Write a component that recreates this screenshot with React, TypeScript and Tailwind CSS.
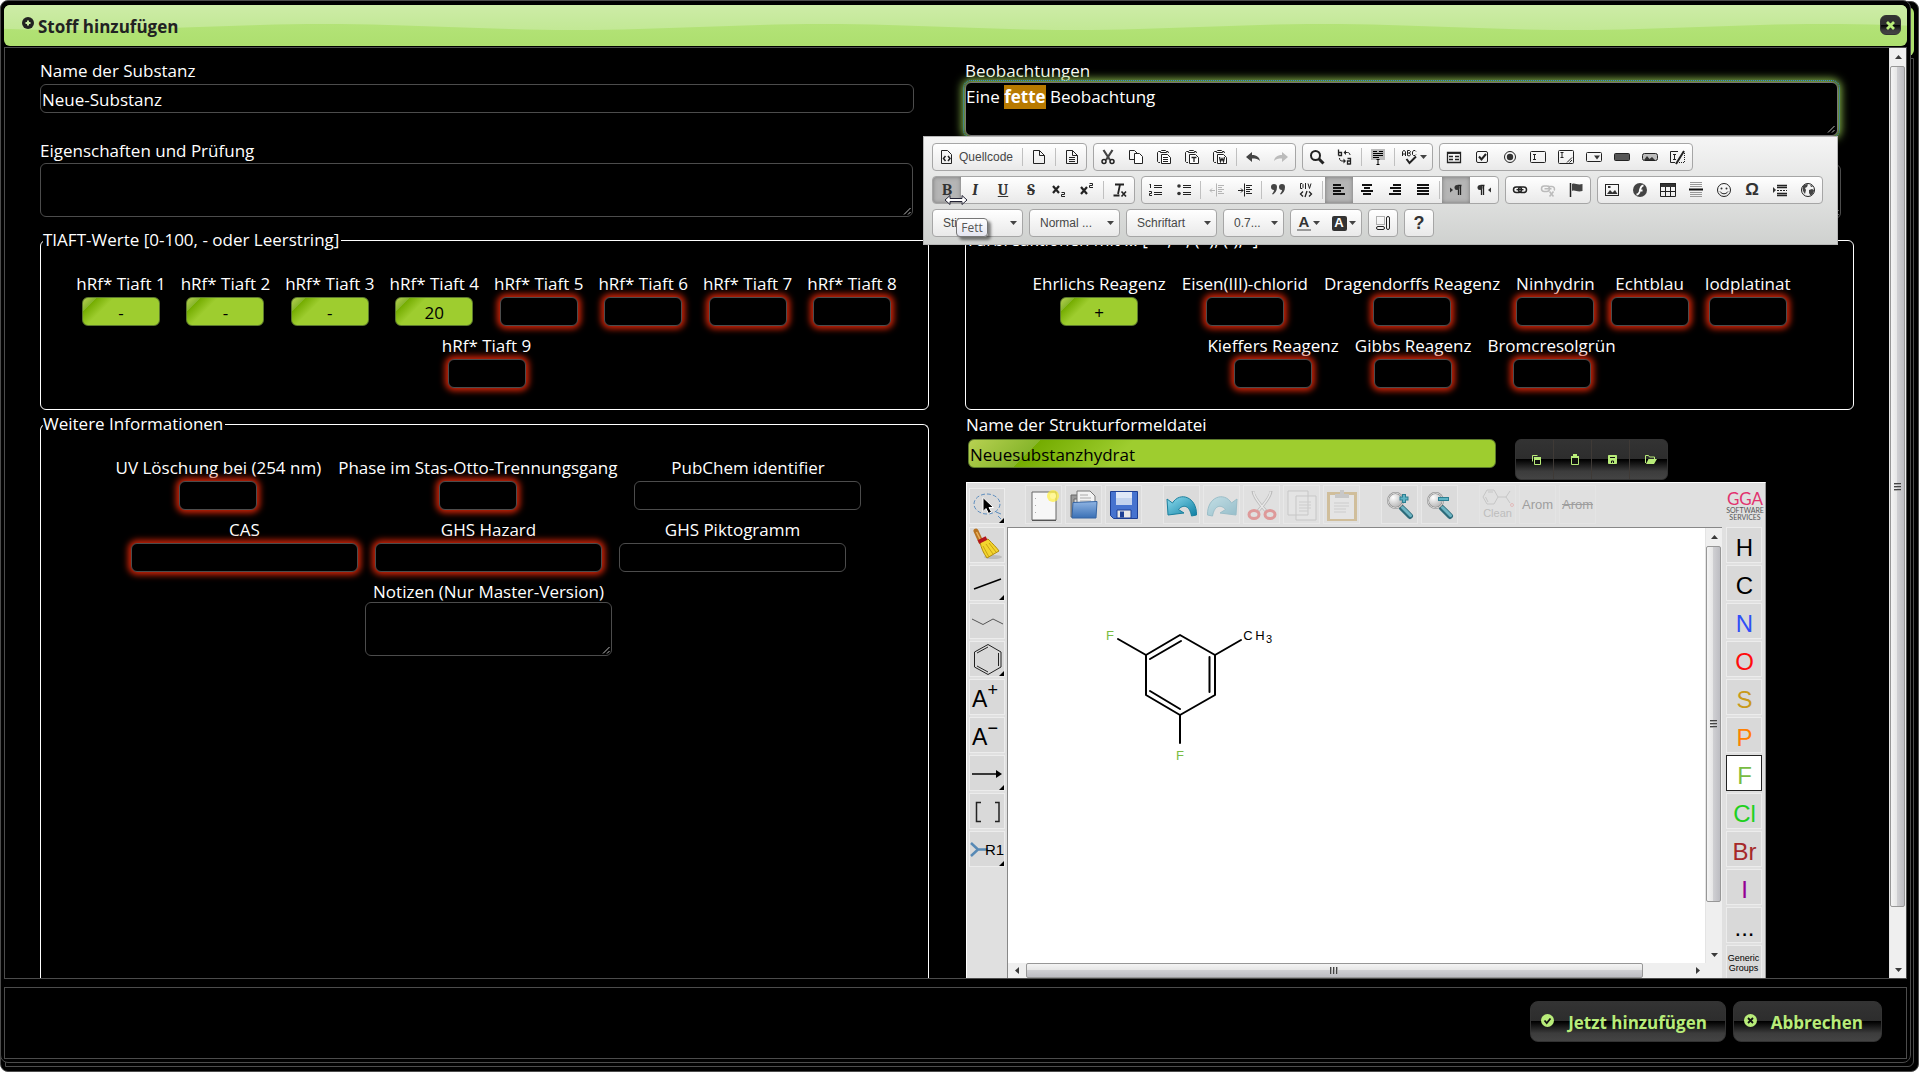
import { useId, type ReactNode } from "react";

/* ---------- shared pieces ---------- */

const BOX = "block h-[29px] rounded-md border text-[17px] leading-6 outline-none";
const TONES = {
  plain: "border-[#4c4c4c] bg-black text-white",
  missing: "border-[#4c4c4c] bg-black text-white shadow-[0_0_6px_3px_#cf2408]",
  valid:
    "border-[#5c7a2c] bg-[linear-gradient(135deg,#b8d152_0%,#86b52b_13%,#74ac00_13%,#9ecd2f_30%)] text-black",
};

type Tone = keyof typeof TONES;

function Field({ label, value = "", tone = "missing", wide = false }: { label: string; value?: string; tone?: Tone; wide?: boolean }) {
  const id = useId();
  return (
    <div className="flex flex-col items-center">
      <label htmlFor={id} className="mb-px h-6 whitespace-nowrap">{label}</label>
      <input id={id} defaultValue={value} className={`${BOX} ${TONES[tone]} ${wide ? "w-[227px]" : "w-[78px]"} pt-0.5 text-center`} />
    </div>
  );
}

function Grip() {
  return (
    <svg className="pointer-events-none absolute right-0.5 bottom-0.5" width="8" height="8" viewBox="0 0 8 8" stroke="#bbb" fill="none">
      <path d="M1 7.5 7.5 1M5 7.5 7.5 5" />
    </svg>
  );
}

function Area({ className }: { className: string }) {
  return <textarea aria-label="Prüfung" className={`${className} block h-[55px] resize-none rounded-md border border-[#4c4c4c] bg-black p-0.5 outline-none`} />;
}

function Arrow({ dir }: { dir: "up" | "down" | "left" | "right" }) {
  const d = { up: "M1 6 4.5 2 8 6z", down: "M1 3 4.5 7 8 3z", left: "M6 1 2 4.5 6 8z", right: "M3 1 7 4.5 3 8z" }[dir];
  return <svg width="9" height="9" viewBox="0 0 9 9" fill="#3a3a3a"><path d={d} /></svg>;
}

function VScroll({ thumb }: { thumb: string }) {
  return (
    <div className="flex w-[17px] shrink-0 flex-col items-center border-l border-[#e4e4e4] bg-[#efefef]">
      <div className="flex h-[18px] shrink-0 items-center"><Arrow dir="up" /></div>
      <div className="flex min-h-0 w-full flex-1 flex-col">
        <div className={`${thumb} flex w-[15px] flex-col items-center justify-center gap-px rounded-xs border border-[#979797] bg-[linear-gradient(90deg,#f4f4f4_0%,#e6e6e6_45%,#cfcfd2_50%,#bdbdc2_100%)]`}>
          <i className="h-0.5 w-[7px] border-t border-[#444] bg-[#aaa]" />
          <i className="h-0.5 w-[7px] border-t border-[#444] bg-[#aaa]" />
          <i className="h-0.5 w-[7px] border-t border-[#444] bg-[#aaa]" />
        </div>
      </div>
      <div className="flex h-[17px] shrink-0 items-center"><Arrow dir="down" /></div>
    </div>
  );
}

function HScroll() {
  return (
    <div className="flex h-[15px] shrink-0 items-center bg-[#efefef] pr-[17px]">
      <div className="flex w-[18px] shrink-0 justify-center"><Arrow dir="left" /></div>
      <div className="flex h-full min-w-0 flex-1">
        <div className="flex h-full w-[93%] items-center justify-center gap-px rounded-xs border border-[#979797] bg-[linear-gradient(180deg,#f4f4f4_0%,#e6e6e6_45%,#cfcfd2_50%,#bdbdc2_100%)]">
          <i className="h-[7px] w-0.5 border-l border-[#444] bg-[#aaa]" />
          <i className="h-[7px] w-0.5 border-l border-[#444] bg-[#aaa]" />
          <i className="h-[7px] w-0.5 border-l border-[#444] bg-[#aaa]" />
        </div>
      </div>
      <div className="flex w-[16px] shrink-0 justify-center"><Arrow dir="right" /></div>
    </div>
  );
}

/* ---------- rich text toolbar ---------- */

function Svg({ children }: { children: ReactNode }) {
  return <svg width="16" height="16" viewBox="0 0 16 16" fill="none" stroke="#222" strokeWidth="1">{children}</svg>;
}

const page = <path d="M2.5 1.5h6l5 5v8h-11zM8.5 1.5v5h5" />;
const clip = (
  <>
    <path d="M4 13.5H2.500l-1-1v-9l1-1H4M10.500 2.500H12l.5 1.500" />
    <path d="M4.500 3.500v-1l1-1h4l1 1v1z" fill="#fff" />
    <path d="M5.500 5.500h6l3 3v6h-9z" fill="#fff" />
  </>
);
const glyph = "font-serif font-bold";

const ICONS: Record<string, ReactNode> = {
  source: <Svg><path d="M2.500 1.500h6l4 4v9h-10z" /><path d="M6.500 7 4.500 9.500l2 2.500M9 7l2 2.500L9 12" strokeWidth="1.500" /></Svg>,
  newpage: <Svg>{page}</Svg>,
  template: <Svg>{page}<path d="M5 8.500h6M5 10.500h6M5 12.500h6" /></Svg>,
  cut: <Svg><path d="M3.500 1 10 11M12.500 1 6 11" strokeWidth="2.200" stroke="#444" /><circle cx="4" cy="12.500" r="2" strokeWidth="1.500" /><circle cx="12" cy="12.500" r="2" strokeWidth="1.500" /></Svg>,
  copy: <Svg><path d="M1.500 1.500h5l3 3v6h-8z" /><path d="M6.500 4.500h5l3 3v7h-8z" fill="#fff" /></Svg>,
  paste: <Svg>{clip}<path d="M7 8.500h5M7 10.500h5M7 12.500h5" /></Svg>,
  pastetext: <Svg>{clip}<path d="M7.500 8.500h5M10 8.500V13" strokeWidth="1.300" /></Svg>,
  pasteword: <Svg>{clip}<path d="m7.500 8 1 4.500 1.500-3 1.500 3 1-4.500" strokeWidth="1.300" /></Svg>,
  undo: <Svg><path d="M1 8 7 3v3c5 0 7.500 2.500 8 6-2-2-4-2.500-8-2.500V13z" fill="#444" stroke="none" /></Svg>,
  redo: <Svg><path d="M15 8 9 3v3c-5 0-7.500 2.500-8 6 2-2 4-2.500 8-2.500V13z" fill="#bbb" stroke="none" /></Svg>,
  find: <Svg><circle cx="6.500" cy="6.500" r="4.500" strokeWidth="2" /><path d="m10 10 4.500 4.500" strokeWidth="3" /></Svg>,
  replace: <Svg><path d="M1.500.5v6M1.500 3.500h3v3h-3M10.500 9.500h3v6M13.500 12h-3v3h3" strokeWidth="1.300" /><path d="M8.500 3.500h2c1.500 0 2.500 1 2.500 2.500M2.500 9c0 2 1 3 2.500 3h2" /><path d="M9 1 6.500 3.500 9 6zM6.500 9.500 9 12l-2.500 2.500z" fill="#222" stroke="none" /></Svg>,
  selectall: <Svg><path d="M1 0h14v11H1z" fill="#bbb" stroke="none" /><path d="M3 2.500h4M9 2.500h4M3 4.500h10M3 6.500h10M3 8.500h6M8 10.500v5M6.500 10.500h3M6.500 15.500h3" stroke="#000" /></Svg>,
  spell: <Svg><path d="M.5 7V3l1-1.500h1L3.500 3v4M.5 5h3M5.500 6.500v-5h2l1 1-1 1.500 1 1.500-1 1.500zM6 4h2M14 2.500 13 1.500h-1.500l-1 1.500v2.500l1 1H13l1-1" /><path d="m4.500 10 3 4L14 7.500" strokeWidth="2" /></Svg>,
  form: <Svg><path d="M1 3h14v2H1z" fill="#333" stroke="none" /><path d="M1.500 3.500h13v10h-13zM3 7.500h4M9 7.500h4M3 10.500h4M9 10.500h4" strokeWidth="1.300" /></Svg>,
  check: <Svg><rect x="2.500" y="2.500" width="11" height="11" rx="1.500" /><path d="m5 7.500 2.500 3L12 5" strokeWidth="2" /></Svg>,
  radio: <Svg><circle cx="8" cy="8" r="5.500" /><circle cx="8" cy="8" r="3.200" fill="#333" stroke="none" /></Svg>,
  textfield: <Svg><rect x=".5" y="2.500" width="15" height="11" rx="1" /><path d="M3 5.500h3M3 10.500h3M4.500 5.500v5" /></Svg>,
  textarea: <Svg><rect x=".5" y="1.500" width="15" height="13" rx="1" /><path d="M2.500 3.500h3M2.500 8.500h3M4 3.500v5M9 13.500l5-5M11.500 13.500l2.500-2.500" /></Svg>,
  select: <Svg><rect x=".5" y="3.500" width="15" height="9" rx="1" /><path d="M8 6.500h6l-3 4z" fill="#333" stroke="none" /></Svg>,
  button: <Svg><rect x=".5" y="4.500" width="15" height="7" rx="1" fill="#555" /></Svg>,
  imagebutton: <Svg><rect x=".5" y="4.500" width="15" height="7" rx="2" fill="#bbb" /><path d="m2 11 3-4 2.500 3L10 8l3 3z" fill="#333" stroke="none" /></Svg>,
  hidden: <Svg><path d="M8 2.500H.5v11H5M3 5.500h3M3 10.500h3M4.500 5.500v5" /><path d="M14 2 6 15" strokeWidth="2" /><path d="M14.500 4v9.500H9" strokeDasharray="1 1" /></Svg>,
  bold: <span className={`${glyph} text-[16px]`}>B</span>,
  italic: <span className={`${glyph} text-[16px] italic`}>I</span>,
  underline: <span className={`${glyph} text-[15px] underline`}>U</span>,
  strike: <span className={`${glyph} text-[16px] line-through`}>S</span>,
  sub: <Svg><path d="m2 4 6 7M8 4l-6 7" strokeWidth="2.200" /><path d="M10.500 10.500h3v2h-3v2h3.500" /></Svg>,
  sup: <Svg><path d="m2 5 6 7M8 5l-6 7" strokeWidth="2.200" /><path d="M10.500 1.500h3v2h-3v2h3.500" /></Svg>,
  removeformat: <Svg><path d="M3 2.500h9M8 2.500 6 12M1.500 13.500h6" strokeWidth="1.800" /><path d="m9.500 9.500 4.500 5M14 9.500l-4.500 5" strokeWidth="1.600" /></Svg>,
  ol: <Svg><path d="M2.500 2v4M1.500 2.500h1M1 9.500h2.500v2H1.500v2H4" /><path d="M6 3.500h8M6 5.500h8M6 10.500h8M6 12.500h8" /></Svg>,
  ul: <Svg><circle cx="3" cy="4" r="1.800" fill="#333" stroke="none" /><circle cx="3" cy="11.500" r="1.800" fill="#333" stroke="none" /><path d="M7 3.500h8M7 5.500h8M7 10.500h8M7 12.500h8" /></Svg>,
  outdent: <Svg><g stroke="#b5b5b5"><path d="M7.500 1.500v13M9 3.500h6M9 5.500h4M9 7.500h6M9 9.500h4M9 11.500h6M1 8.500h5M3 6.500 1 8.500l2 2" /></g></Svg>,
  indent: <Svg><path d="M7.500 1.500v13M9 3.500h6M9 5.500h4M9 7.500h6M9 9.500h4M9 11.500h6M1 8.500h5M4 6.500l2 2-2 2" /></Svg>,
  quote: <Svg><path d="M1 5a3 3 0 1 1 6 0c0 4-2 6-4 7.500L2 12c1-1.500 2-2.500 2-4-2 0-3-1-3-3zM9 5a3 3 0 1 1 6 0c0 4-2 6-4 7.500L10 12c1-1.500 2-2.500 2-4-2 0-3-1-3-3z" fill="#444" stroke="none" /></Svg>,
  div: <Svg><path d="M2.500 1.500v5M2.500 1.500H4l1 1v3l-1 1H2.500M7.500 1v6M10 1.500l1.500 5 1.500-5" /><path d="M5 9.500 2.500 12 5 14.500M11 9.500l2.500 2.500-2.500 2.500M9 9l-2 6" strokeWidth="1.300" /></Svg>,
  left: <Svg><path d="M2 3h8M2 6h11M2 9h8M2 12h12" strokeWidth="2" stroke="#111" /></Svg>,
  center: <Svg><path d="M3 3h10M5 6h6M2 9h12M4 12h8" strokeWidth="2" stroke="#111" /></Svg>,
  right: <Svg><path d="M6 3h8M3 6h11M6 9h8M2 12h12" strokeWidth="2" stroke="#111" /></Svg>,
  justify: <Svg><path d="M2 3h12M2 6h12M2 9h12M2 12h12" strokeWidth="2" stroke="#111" /></Svg>,
  ltr: <Svg><path d="M2 5.500 5 8l-3 2.500z" fill="#333" stroke="none" /><path d="M13.500 3.500h-4M10.500 3v10M12.500 3v10" strokeWidth="1.300" /><circle cx="9" cy="5.500" r="2.500" fill="#333" stroke="none" /></Svg>,
  rtl: <Svg><path d="M15 5.500 12 8l3 2.500z" fill="#333" stroke="none" /><path d="M8.500 3.500h-4M5.500 3v10M7.500 3v10" strokeWidth="1.300" /><circle cx="4" cy="5.500" r="2.500" fill="#333" stroke="none" /></Svg>,
  link: <Svg><rect x="1.500" y="5" width="8" height="5.500" rx="2.700" strokeWidth="1.500" /><rect x="6.500" y="5" width="8" height="5.500" rx="2.700" strokeWidth="1.500" /><path d="M4.500 7.700h7" strokeWidth="1.300" /></Svg>,
  unlink: <Svg><g stroke="#bbb"><rect x="1.500" y="4" width="8" height="5.500" rx="2.700" strokeWidth="1.500" /><path d="M8 4.500h4a2.500 2.500 0 0 1 2 4M4.500 6.800h7" strokeWidth="1.500" /><path d="m9.500 9.500 4 5M13.500 9.500l-4 5" strokeWidth="1.600" /></g></Svg>,
  flag: <Svg><path d="M2.500 1v14" strokeWidth="1.500" /><path d="M4 2c3-1.500 5 1.500 10.500 0v7C9 10.500 7 7.500 4 9z" fill="#444" stroke="none" /></Svg>,
  image: <Svg><rect x="1.500" y="2.500" width="13" height="11" /><path d="m3 12 3-4 2.500 2.500L11 8l2.500 4zM4 4h2.500v2H4z" fill="#333" stroke="none" /></Svg>,
  flash: <Svg><circle cx="8" cy="8" r="7" fill="#444" stroke="none" /><path d="M11.500 3.500C8.500 3.500 8 8 7.500 10c-.5 1.500-1.500 2.500-3 2.500M7 8.500h3.500" stroke="#fff" strokeWidth="1.800" /></Svg>,
  table: <Svg><path d="M0 1h16v4H0z" fill="#333" stroke="none" /><path d="M.5 1.500h15v13H.5zM.5 9.500h15M5.500 5v9.500M10.500 5v9.500" /></Svg>,
  hr: <Svg><path d="M2 .5h12M2 2.500h12M2 4.500h12M2 10.500h12M2 12.500h12M2 14.500h12" stroke="#999" /><path d="M1 7.500h14" strokeWidth="2" stroke="#111" /></Svg>,
  smiley: <Svg><circle cx="8" cy="8" r="6.500" /><circle cx="5.500" cy="6.500" r="1" fill="#333" stroke="none" /><circle cx="10.500" cy="6.500" r="1" fill="#333" stroke="none" /><path d="M4 9.500c2 3 6 3 8 0" /></Svg>,
  omega: <span className="text-[17px] font-bold">Ω</span>,
  pagebreak: <Svg><path d="M1 5v6l3-3z" fill="#333" stroke="none" /><path d="M5 3.500h10M5 5.500h10M5 11.500h10M5 13.500h10" strokeWidth="1.500" /><path d="M5 8.500h10" strokeDasharray="2 1" /></Svg>,
  globe: <Svg><circle cx="8" cy="8" r="6.500" /><path d="M3 4c2-2 4-2 5-1.500L7 5 5 6l1 2-1 4C3 10 2 7 3 4zM9 8l3-1 2 1c0 3-2 5-3.500 5.500L9 11zM10 2.500l3 2-2 .5z" fill="#444" stroke="none" /></Svg>,
  color: <span className="border-b-2 border-[#999] px-0.5 text-[15px] leading-[14px] font-bold">A</span>,
  bgcolor: <span className="flex h-[15px] w-[15px] items-center justify-center rounded-xs bg-[#333] text-[13px] font-bold text-white">A</span>,
  blocks: <Svg><rect x="1.500" y="1.500" width="8" height="8" strokeDasharray="1 1" stroke="#666" /><rect x="1.500" y="11.500" width="8" height="3" rx="1.500" /><rect x="11.500" y="1.500" width="3" height="13" rx="1.500" /></Svg>,
  help: <span className="text-[18px] font-bold">?</span>,
};

function Tool({ name, active = false, arrow = false }: { name: string; active?: boolean; arrow?: boolean }) {
  return (
    <button
      type="button"
      aria-label={name}
      aria-pressed={active}
      className={`flex h-full shrink-0 items-center justify-center gap-0.5 ${arrow ? "w-[35px]" : "w-7"} ${active ? "bg-[#b5b5b5] shadow-[inset_0_0_4px_#777]" : ""}`}
    >
      {ICONS[name]}
      {arrow && <Caret />}
    </button>
  );
}

function Caret() {
  return <svg width="7" height="4" viewBox="0 0 7 4" fill="#444"><path d="M0 0h7L3.500 4z" /></svg>;
}

function Group({ children }: { children: ReactNode }) {
  return <div className="flex h-7 shrink-0 items-center overflow-hidden rounded-sm border border-[#a6a6a6] bg-linear-to-b from-white to-[#e9e9e9]">{children}</div>;
}

function Tools({ items, active = [] }: { items: string; active?: string[] }) {
  return (
    <Group>
      {items.split(" ").map((name, i) =>
        name === "|" ? (
          <i key={i} className="mx-0.5 h-[18px] w-px shrink-0 bg-[#c0c0c0]" />
        ) : (
          <Tool key={i} name={name} active={active.includes(name)} arrow={["spell", "color", "bgcolor"].includes(name)} />
        ),
      )}
    </Group>
  );
}

function Combo({ label, text, narrow = false }: { label: string; text: string; narrow?: boolean }) {
  return (
    <div className={`relative h-7 shrink-0 ${narrow ? "w-[61px]" : "w-[91px]"}`}>
      <select aria-label={label} className="h-full w-full appearance-none rounded-sm border border-[#a6a6a6] bg-linear-to-b from-white to-[#e9e9e9] pl-2.5 text-[12px] text-[#474747]">
        <option>{text}</option>
      </select>
      <span className="pointer-events-none absolute top-3 right-1.5"><Caret /></span>
    </div>
  );
}

function EditorToolbar() {
  return (
    <div className="absolute top-[77px] right-4 -left-[42px] z-10 flex flex-col gap-[5px] border border-[#b6b6b6] bg-linear-to-b from-[#f5f5f5] to-[#cfd1cf] px-2 pt-1.5 pb-[7px] font-['Liberation_Sans',sans-serif] text-[#333]">
      <div className="flex gap-1.5">
        <Group>
          <button type="button" className="flex h-full items-center gap-1 pr-[7px] pl-1.5 text-[12px] text-[#474747]">{ICONS.source}Quellcode</button>
          <i className="mx-0.5 h-[18px] w-px bg-[#c0c0c0]" />
          <Tool name="newpage" />
          <i className="mx-0.5 h-[18px] w-px bg-[#c0c0c0]" />
          <Tool name="template" />
        </Group>
        <Tools items="cut copy paste pastetext pasteword | undo redo" />
        <Tools items="find replace | selectall | spell" />
        <Tools items="form check radio textfield textarea select button imagebutton hidden" />
      </div>
      <div className="flex gap-1.5">
        <Tools items="bold italic underline strike sub sup | removeformat" active={["bold"]} />
        <Tools items="ol ul | outdent indent | quote div | left center right justify | ltr rtl" active={["left", "ltr"]} />
        <Tools items="link unlink flag" />
        <Tools items="image flash table hr smiley omega pagebreak globe" />
      </div>
      <div className="flex gap-1.5">
        <Combo label="Stil" text="Stil" />
        <Combo label="Format" text="Normal ..." />
        <Combo label="Schriftart" text="Schriftart" />
        <Combo label="Größe" text="0.7..." narrow />
        <Tools items="color bgcolor" />
        <Tools items="blocks" />
        <Tools items="help" />
      </div>
      <div role="tooltip" className="absolute top-[81px] left-8 flex h-[19px] w-8 items-center justify-center rounded-sm border border-[#767676] bg-linear-to-b from-white to-[#e4e5f0] font-['Open_Sans',sans-serif] text-[12px] text-[#575757] shadow-[3px_3px_3px_#0007]">Fett</div>
      <svg className="absolute top-[57px] left-[20px]" width="24" height="12" viewBox="0 0 24 12" fill="#fff" stroke="#223" strokeWidth="1">
        <path d="m1 6 5-4.500v3h12v-3L23 6l-5 4.500v-3H6v3z" />
      </svg>
    </div>
  );
}

/* ---------- structure editor ---------- */

const corner = <path d="M35 30v5h-5z" fill="#000" stroke="none" />;

function Cell({ label, children }: { label: string; children: ReactNode }) {
  return (
    <button type="button" aria-label={label} className="h-9 w-9 shrink-0 border border-[#ececec] bg-[#d9d9d9]">
      <svg className="-m-px" width="36" height="36" viewBox="0 0 36 36" fill="none" stroke="#000" strokeWidth="1.500">{children}</svg>
    </button>
  );
}

function Charge({ sign }: { sign: string }) {
  return (
    <button type="button" className="flex h-9 w-9 shrink-0 justify-center border border-[#ececec] bg-[#d9d9d9] pr-1 leading-none">
      <span className="pt-2 text-[23px]">A</span>
      <span className="pt-px text-[18px]">{sign}</span>
    </button>
  );
}

function Big({ label, faded = false, children }: { label: string; faded?: boolean; children: ReactNode }) {
  return (
    <button type="button" aria-label={label} className={`flex h-[39px] w-[37px] shrink-0 items-center justify-center border border-[#e8e8e8] ${faded ? "" : "bg-[#dbdbdb]"}`}>
      <svg className={faded ? "opacity-35" : ""} width="32" height="32" viewBox="0 0 32 32" fill="none">{children}</svg>
    </button>
  );
}

const lens = (
  <>
    <path d="m18 19 8 8" stroke="#2d6b7a" strokeWidth="6" strokeLinecap="round" />
    <path d="m18.500 18.500 8 8" stroke="#6db4c2" strokeWidth="3" strokeLinecap="round" />
    <circle cx="11.500" cy="11.500" r="7.500" fill="url(#lens)" stroke="#888" strokeWidth="2" />
    <circle cx="11.500" cy="11.500" r="7.500" stroke="#eee" strokeWidth=".8" />
  </>
);

const ELEMENTS: [string, string][] = [
  ["H", "text-black"],
  ["C", "text-black"],
  ["N", "text-[#304ff7]"],
  ["O", "text-[#ff0d0d]"],
  ["S", "text-[#c99a19]"],
  ["P", "text-[#ff8000]"],
  ["F", "text-[#78bc42]"],
  ["Cl", "text-[#1fd01f]"],
  ["Br", "text-[#a62929]"],
  ["I", "text-[#940094]"],
  ["...", "text-black"],
];

function StructureEditor() {
  return (
    <section aria-label="Struktureditor" className="mt-0.5 ml-px flex min-h-0 w-[800px] flex-1 flex-col overflow-hidden border-t border-r border-l border-t-white border-r-[#999] border-l-white bg-[#e0e0e0] font-['Liberation_Sans',sans-serif] text-black">
      <svg className="absolute h-0 w-0" aria-hidden="true">
        <defs>
          <radialGradient id="lens" cx=".35" cy=".3" r=".8"><stop offset="0" stopColor="#fff" /><stop offset="1" stopColor="#aaa" /></radialGradient>
          <linearGradient id="blue" x2="0" y2="1"><stop offset="0" stopColor="#8fb4e3" /><stop offset="1" stopColor="#3a70b5" /></linearGradient>
          <linearGradient id="teal" x2="1" y2="1"><stop offset="0" stopColor="#8fdcee" /><stop offset="1" stopColor="#0d7fa3" /></linearGradient>
        </defs>
      </svg>
      <div className="flex h-[44px] shrink-0 items-start gap-[3px] pt-0.5 pl-0.5">
        <div className="mr-[17px] pt-[3px]">
          <Cell label="Auswahl">
            <ellipse cx="18" cy="16" rx="13" ry="10" stroke="#5f8fbf" strokeWidth="1" strokeDasharray="4 2" />
            <path d="m27 24 5 2M29 28l3 3" stroke="#5f8fbf" strokeWidth="1" />
            <path d="M14 9.500v14l3-3 2.500 5 3-1.500-2.500-4.500h4.500z" fill="#000" stroke="#fff" strokeWidth="1" />
            {corner}
          </Cell>
        </div>
        <Big label="Neu">
          <path d="M4 3h24v28H4z" fill="#f7f7f7" stroke="#666" /><path d="M4 31.500h24" stroke="#555" /><path d="M7.500 9v1M7.500 16v1M7.500 23v1" stroke="#aaa" />
          <circle cx="25" cy="7" r="6" fill="#ffef3a" opacity=".7" /><circle cx="25" cy="7" r="3" fill="#fff79a" />
        </Big>
        <Big label="Öffnen">
          <path d="M3 6h8v4h-5v18H3z" fill="#999" stroke="#666" /><path d="M9 2h13l5 5v8H9z" fill="#f3f3f3" stroke="#777" /><path d="M12 6h8M12 9h11M12 12h11" stroke="#aaa" />
          <path d="M5 13.500 29 12.500 28 29H4z" fill="url(#blue)" stroke="#3665a3" />
        </Big>
        <Big label="Speichern">
          <path d="M2.500 2.500h27v27h-24l-3-3z" fill="#4673cf" stroke="#1d3f94" /><path d="M8 3h16v13H8z" fill="#dfe8f8" /><path d="M8 9h16v7H8z" fill="#c3d3ee" /><path d="M9 21h14v8H9z" fill="#e8e8e8" stroke="#1d3f94" /><path d="M12 22.500h4v6h-4z" fill="#1d3f94" />
        </Big>
        <span className="w-[15px]" />
        <Big label="Rückgängig"><path d="M1 10 2 26l16-2-5.500-3.500c4-5 11-5 13 6.500l5-1C31 8 14 2 6.500 14z" fill="url(#teal)" stroke="#1b7f9d" /></Big>
        <Big label="Wiederholen" faded><path d="M31 10 30 26l-16-2 5.500-3.500c-4-5-11-5-13 6.500l-5-1C1 8 18 2 25.500 14z" fill="url(#teal)" stroke="#1b7f9d" /></Big>
        <Big label="Ausschneiden" faded>
          <path d="M7 2c0 3 3 9 13 20M25 2c0 3-3 9-13 20" stroke="#777" strokeWidth="3" /><path d="M7.500 2.500c0 3 3 9 12 19M24.500 2.500c0 3-3 9-12 19" stroke="#f5f5f5" strokeWidth="1.500" />
          <ellipse cx="8" cy="25.500" rx="5" ry="4" stroke="#dc1a1a" strokeWidth="3" /><ellipse cx="24" cy="25.500" rx="5" ry="4" stroke="#dc1a1a" strokeWidth="3" />
        </Big>
        <Big label="Kopieren" faded><path d="M2 2h20v24H2zM10 7h20v24H10z" fill="#eee" stroke="#999" /><path d="M13 13h12M13 16h12M13 19h12M13 22h9" stroke="#aaa" /></Big>
        <Big label="Einfügen" faded><path d="M2.500 4.500h27v27h-27z" fill="#eee" stroke="#b5821e" strokeWidth="3" /><path d="M9 5h5V1h4v4h5v4H9z" fill="#999" /><path d="M8 14h15M8 17h15M8 20h12M8 23h12" stroke="#aaa" /></Big>
        <span className="w-[15px]" />
        <Big label="Vergrößern">{lens}<path d="M20 5v9M15.500 9.500h9" stroke="#2d7f92" strokeWidth="4" /><path d="M20 6v7M16.500 9.500h7" stroke="#5fb3c4" strokeWidth="2" /></Big>
        <Big label="Verkleinern">{lens}<path d="M14 10h11" stroke="#2d7f92" strokeWidth="4" /><path d="M15 10h9" stroke="#5fb3c4" strokeWidth="2" /></Big>
        <span className="w-[15px]" />
        <button type="button" className="flex h-[39px] w-[37px] flex-col items-center justify-end border border-[#e4e4e4] pb-1 text-[11px] leading-3 text-[#bdbdbd]">
          <svg width="32" height="20" viewBox="0 0 32 20" fill="none" stroke="#c6c6c6"><path d="m1 10 4-7h7l4 7-4 7H5zM6 5h5M3.500 10 6 15M16 10h8l4-6M24 10l4 6" /><circle cx="30" cy="18" r="1.500" stroke="#e2baba" /></svg>
          Clean
        </button>
        <button type="button" className="h-[39px] w-[37px] border border-[#e4e4e4] text-[13px] text-[#9e9e9e]">Arom</button>
        <button type="button" className="h-[39px] w-[37px] border border-[#e4e4e4] text-[13px] text-[#9e9e9e] line-through">Arom</button>
        <div className="mr-0.5 ml-auto flex w-9 flex-col items-center pt-1.5">
          <span className="font-['Lato',sans-serif] text-[17px] leading-4 text-[#e2336f]">GGA</span>
          <span className="font-['Lato',sans-serif] text-[7px] leading-[7px] text-[#555]">SOFTWARE</span>
          <span className="font-['Lato',sans-serif] text-[7px] leading-[7px] text-[#555]">SERVICES</span>
        </div>
      </div>
      <div className="flex min-h-0 flex-1">
        <div className="flex w-10 shrink-0 flex-col gap-0.5 pl-0.5">
          <Cell label="Radierer">
            <path d="m7 4 5 11" stroke="#b87320" strokeWidth="5" strokeLinecap="round" /><path d="m7.500 5 4 8" stroke="#e8b15c" strokeWidth="1.500" />
            <ellipse cx="24" cy="30" rx="9" ry="2" fill="#bbb" stroke="none" />
            <path d="m11 15 8-3c5 5 9 9 11 12l-12 7c-3-4-6-10-7-16z" fill="#f3d52e" stroke="#b28c0c" strokeWidth="1" />
            <path d="m14 19 6 11M17 17l7 10M20 16l7 9" stroke="#c9a315" strokeWidth="1" /><path d="m9.500 15 8-4" stroke="#b3151d" strokeWidth="4" />
          </Cell>
          <Cell label="Bindung"><path d="m5 24 27-10" />{corner}</Cell>
          <Cell label="Kette"><path d="m3 16 11 5.500L24 16l10 5" stroke="#555" strokeWidth="1" /></Cell>
          <Cell label="Ring"><path d="m19 3.500 13 7.500v15l-13 7.500L5.500 26V11zM8 12l11-6M29.500 12v13M8 25l11 6" stroke="#222" strokeWidth="1" />{corner}</Cell>
          <Charge sign="+" />
          <Charge sign="−" />
          <Cell label="Pfeil"><path d="M3 19h26" /><path d="m27 15 6 4-6 4z" fill="#000" stroke="none" />{corner}</Cell>
          <Cell label="Klammern"><path d="M12 9.500H7.500v19H12M26 9.500h4v19h-4" stroke="#222" /></Cell>
          <Cell label="R-Gruppe">
            <path d="m2 12 7 6.500-7 6.500M9 18.500h10" stroke="#5789b5" strokeWidth="2.500" />
            <text x="16" y="24" fontSize="15" fill="#000" stroke="none">R1</text>{corner}
          </Cell>
        </div>
        <div className="flex min-w-0 flex-1 flex-col border-t border-l border-[#888] bg-white">
          <div className="flex min-h-0 flex-1">
            <div className="min-w-0 flex-1 overflow-hidden">
              <svg width="300" height="260" viewBox="0 0 300 260" fill="none" stroke="#000" strokeWidth="2" strokeLinecap="round" strokeLinejoin="round">
                <path d="m172 107 35 20v40l-35 20-34-20v-40zM142 131l31-18M201.500 129v35M142 163l30 18" />
                <path d="m110 111 28 16M207 127l26-15M172 187v28" />
                <g stroke="none" fontSize="13" fill="#78bc42" textAnchor="middle">
                  <text x="102" y="112">F</text>
                  <text x="172" y="232">F</text>
                  <text y="112" fill="#000"><tspan x="240">C</tspan><tspan x="252">H</tspan><tspan x="261" y="115" fontSize="11">3</tspan></text>
                </g>
              </svg>
            </div>
            <VScroll thumb="h-[89%]" />
          </div>
          <HScroll />
        </div>
        <div className="flex w-[43px] shrink-0 flex-col items-center gap-0.5">
          {ELEMENTS.map(([name, color]) => (
            <button
              key={name}
              type="button"
              className={`h-9 w-9 shrink-0 border pt-1 pl-0.5 text-[24px] leading-8 ${color} ${name === "F" ? "border-[#222] bg-white" : "border-[#ececec] bg-[#d9d9d9]"}`}
            >
              {name}
            </button>
          ))}
          <button type="button" className="h-9 w-9 shrink-0 border border-[#ececec] bg-[#d9d9d9] text-[9px] leading-[10px]">Generic<br />Groups</button>
        </div>
      </div>
    </section>
  );
}

/* ---------- dialog ---------- */

const DARK = "border border-[#333] bg-[linear-gradient(180deg,#333_0%,#2d2d2d_49%,#000_50%,#3c3c3c_80%,#444_100%)] text-[#b8ec79]";

function FileButtons() {
  const icons: [string, ReactNode][] = [
    ["Kopieren", <><path d="M1.500 7.500v-6h5" /><path d="M3.500 4.500h6v6h-6z" fill="#111" /><path d="M3 3h7v3H3z" fill="#b8ec79" stroke="none" /></>],
    ["Einfügen", <><path d="M2.500 2.500h7v8h-7z" fill="#111" /><path d="M2 2h2V0h4v2h2v2H2z" fill="#b8ec79" stroke="none" /></>],
    ["Speichern", <><path d="M1.500 1.500h8v8h-8z" fill="#b8ec79" /><path d="M3 3.500h5M4.500 9V7h2v2" stroke="#111" /></>],
    ["Öffnen", <><path d="M.5 9V1.500h3l1 1.500h5v2" /><path d="M1 10 3.500 5H12L9 10z" fill="#b8ec79" stroke="none" /></>],
  ];
  return (
    <div className={`${DARK} flex h-[41px] w-[153px] rounded-md`}>
      {icons.map(([name, art]) => (
        <button key={name} type="button" aria-label={name} className="flex flex-1 items-center justify-center border-r border-[#3f3a36] pl-1 last:border-r-0">
          <svg width="12" height="11" viewBox="0 0 12 11" fill="none" stroke="#b8ec79">{art}</svg>
        </button>
      ))}
    </div>
  );
}

function DialogButton({ children, mark }: { children: string; mark: string }) {
  return (
    <button type="button" className={`${DARK} flex h-[41px] items-center gap-3.5 rounded-lg pt-0.5 pr-[18px] pl-2.5 text-[17px] font-bold`}>
      <svg className="-mt-1" width="13" height="13" viewBox="0 0 13 13"><circle cx="6.500" cy="6.500" r="6.500" fill="#b8ec79" /><path d={mark} fill="none" stroke="#111" strokeWidth="1.800" /></svg>
      {children}
    </button>
  );
}

function TitleBar() {
  return (
    <header className="relative flex h-[41px] shrink-0 items-center overflow-hidden rounded-md bg-linear-to-b from-[#b8e67f] to-[#addf6e] px-[18px] pt-0.5">
      <svg className="absolute inset-0 h-full w-full" aria-hidden="true">
        <defs>
          <linearGradient id="gloss" x2="0" y2="1"><stop offset="0" stopColor="#cdeca7" /><stop offset="1" stopColor="#c2e895" /></linearGradient>
          <pattern id="wave" width="500" height="41" x="-180" patternUnits="userSpaceOnUse">
            <path d="M0 0h500v19c-90 0-160 6-250 6S90 19 0 19z" fill="url(#gloss)" />
          </pattern>
        </defs>
        <rect width="100%" height="100%" fill="url(#wave)" />
      </svg>
      <svg className="relative mr-1 -mt-2" width="12" height="12" viewBox="0 0 12 12"><circle cx="6" cy="6" r="6" fill="#222" /><path d="M6 3.500v5M3.500 6h5" stroke="#c9eaa3" strokeWidth="2" /></svg>
      <h1 className="relative text-[17px] leading-6 font-bold text-[#222]">Stoff hinzufügen</h1>
      <button type="button" aria-label="Schließen" className={`${DARK} absolute top-2.5 right-1.5 flex h-5 w-[21px] items-center justify-center rounded-md`}>
        <svg width="9" height="9" viewBox="0 0 9 9"><path d="m1 1 7 7M8 1 1 8" stroke="#b8ec79" strokeWidth="2.800" /></svg>
      </button>
    </header>
  );
}

export default function App() {
  const nameId = useId();
  const propId = useId();
  const fileId = useId();
  const notesId = useId();
  return (
    <div className="relative h-screen overflow-hidden bg-white font-['Open_Sans','Noto_Sans',sans-serif] text-[17px] leading-6 text-white">
      {/* second dialog, peeking out behind the active one */}
      <div className="absolute top-px right-px bottom-2 left-0 rounded-lg border border-[#4c4c4c] bg-black p-1 pt-[5px]">
        <div className="h-[49px] rounded-md bg-[#addf6e]" />
        <div className="mt-0.5 h-[calc(100%-51px)] rounded-br-md border border-[#4c4c4c]" />
      </div>

      <div role="dialog" aria-label="Stoff hinzufügen" className="relative mr-[9px] flex h-[calc(100%-17px)] flex-col rounded-lg border border-[#4c4c4c] bg-black px-[3px] pt-1 pb-[3px]">
        <TitleBar />

        <div className="mt-px flex min-h-0 flex-1 border border-[#4c4c4c]">
          <div className="grid min-w-0 flex-1 grid-cols-2 grid-rows-1 gap-x-9 overflow-hidden px-[35px] pt-[11px]">
            <div className="flex min-h-0 min-w-0 flex-col">
              <label htmlFor={nameId} className="mb-px">Name der Substanz</label>
              <input id={nameId} defaultValue="Neue-Substanz" className={`${BOX} ${TONES.plain} mr-[15px] px-px pt-0.5`} />
              <label htmlFor={propId} className="mt-[26px]">Eigenschaften und Prüfung</label>
              <div className="relative mr-4">
                <textarea id={propId} className="block h-[54px] w-full resize-none rounded-md border border-[#4c4c4c] bg-black p-0.5 outline-none" />
                <Grip />
              </div>
              <fieldset className="mt-[11px] min-w-0 rounded-md border border-white pb-[21px]">
                <legend className="ml-0.5 pr-0.5">TIAFT-Werte [0-100, - oder Leerstring]</legend>
                <div className="flex flex-wrap justify-center gap-x-[15px] gap-y-2 pt-5 pl-1">
                  {["-", "-", "-", "20", "", "", "", "", ""].map((value, i) => (
                    <Field key={i} label={`hRf* Tiaft ${i + 1}`} value={value} tone={value ? "valid" : "missing"} />
                  ))}
                </div>
              </fieldset>
              <fieldset className="mt-0.5 min-w-0 flex-1 rounded-t-md border border-b-0 border-white">
                <legend className="ml-0.5 pr-0.5">Weitere Informationen</legend>
                <div className="flex flex-wrap justify-center gap-x-[17px] gap-y-2 pt-5 pl-2">
                  <Field label="UV Löschung bei (254 nm)" />
                  <Field label="Phase im Stas-Otto-Trennungsgang" />
                  <Field label="PubChem identifier" tone="plain" wide />
                  <Field label="CAS" wide />
                  <Field label="GHS Hazard" wide />
                  <Field label="GHS Piktogramm" tone="plain" wide />
                  <div className="flex flex-col items-center">
                    <label htmlFor={notesId}>Notizen (Nur Master-Version)</label>
                    <div className="relative -mt-0.5 w-[247px]">
                      <textarea id={notesId} className="block h-[54px] w-full resize-none rounded-md border border-[#4c4c4c] bg-black p-0.5 outline-none" />
                      <Grip />
                    </div>
                  </div>
                </div>
              </fieldset>
            </div>

            <div className="relative flex min-h-0 min-w-0 flex-col">
              <span id="observations">Beobachtungen</span>
              <div
                role="textbox"
                aria-labelledby="observations"
                contentEditable
                suppressContentEditableWarning
                className="relative mr-4 -mt-px h-[54px] shrink-0 rounded-md border border-[#777] bg-black shadow-[0_0_8px_3px_#8fc04d] outline-1 outline-offset-1 outline-[#2f8fd8] outline-dotted"
              >
                <p className="leading-7">Eine <strong className="bg-[#b87a00] pb-px">fette</strong> Beobachtung</p>
                <Grip />
              </div>
              <div className="relative mt-7 mr-[13px]">
                <Area className="w-full" />
                <Grip />
              </div>
              <EditorToolbar />
              <fieldset className="mt-[9px] min-w-0 rounded-md border border-white pb-[21px]">
                <legend className="ml-0.5 pr-0.5">Farbreaktionen mit ... [++, +, (+), (-), -]</legend>
                <div className="flex flex-wrap justify-center gap-x-4 gap-y-2 pt-5 pl-1">
                  <Field label="Ehrlichs Reagenz" value="+" tone="valid" />
                  <Field label="Eisen(III)-chlorid" />
                  <Field label="Dragendorffs Reagenz" />
                  <Field label="Ninhydrin" />
                  <Field label="Echtblau" />
                  <Field label="Iodplatinat" />
                  <Field label="Kieffers Reagenz" />
                  <Field label="Gibbs Reagenz" />
                  <Field label="Bromcresolgrün" />
                </div>
              </fieldset>
              <label htmlFor={fileId} className="mt-[3px] pl-px">Name der Strukturformeldatei</label>
              <div className="mt-0.5 flex items-start gap-[19px] pl-[3px]">
                <input id={fileId} defaultValue="Neuesubstanzhydrat" className={`${BOX} ${TONES.valid} w-[528px] px-px pt-0.5`} />
                <FileButtons />
              </div>
              <StructureEditor />
            </div>
          </div>
          <VScroll thumb="h-[94%]" />
        </div>

        <footer className="mt-2 flex h-[72px] shrink-0 items-start justify-end gap-[7px] border border-[#4c4c4c] pt-[13px] pr-6">
          <DialogButton mark="m3.500 6.500 2.200 2.500L9.500 4.500">Jetzt hinzufügen</DialogButton>
          <DialogButton mark="m4 4 5 5M9 4 4 9">Abbrechen</DialogButton>
        </footer>
      </div>
    </div>
  );
}
